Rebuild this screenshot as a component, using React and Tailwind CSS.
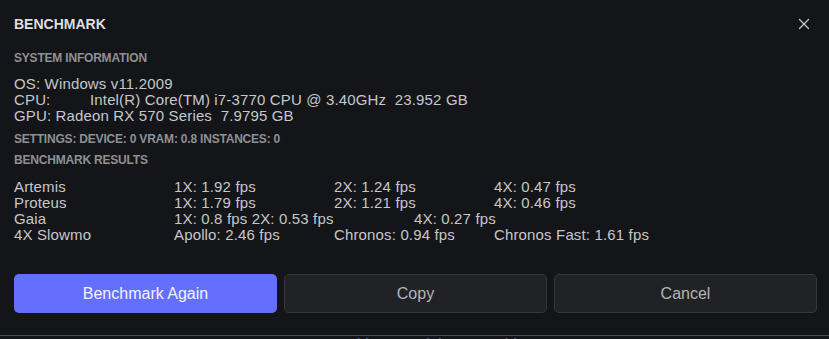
import { X } from 'lucide-react';

const results = [
  { name: 'Artemis', cols: ['1X: 1.92 fps', '2X: 1.24 fps', '4X: 0.47 fps'] },
  { name: 'Proteus', cols: ['1X: 1.79 fps', '2X: 1.21 fps', '4X: 0.46 fps'] },
];

const SectionTitle = ({ children, className = '' }) => (
  <div className={`text-[12px] leading-[16px] font-bold text-[#8f9094] tracking-[-0.2px] ${className}`}>
    {children}
  </div>
);

export default function App() {
  return (
    <div
      className="h-[339px] w-[829px] overflow-hidden bg-[#141519] flex flex-col"
      style={{ fontFamily: '"Liberation Sans", Arial, sans-serif' }}
    >
      <div className="pl-[14px] pr-[12px] flex flex-col">
        <div className="h-[48px] flex items-center justify-between">
          <h1 className="text-[14px] font-bold text-[#dedfe2]">BENCHMARK</h1>
          <button className="w-[24px] h-[24px] mr-[1px] flex items-center justify-center text-[#c9cacd]">
            <X className="w-[18px] h-[18px]" strokeWidth={1.6} />
          </button>
        </div>

        <SectionTitle className="mt-[2px]">SYSTEM INFORMATION</SectionTitle>

        <div className="mt-[10px] text-[15px] leading-[16px] tracking-[0.15px] text-[#c6c7ca] whitespace-pre">
          <div>OS: Windows v11.2009</div>
          <div>
            <span className="inline-block w-[76px]">CPU:</span>
            Intel(R) Core(TM) i7-3770 CPU @ 3.40GHz  23.952 GB
          </div>
          <div>GPU: Radeon RX 570 Series  7.9795 GB</div>
        </div>

        <SectionTitle className="mt-[7px]">SETTINGS: DEVICE: 0 VRAM: 0.8 INSTANCES: 0</SectionTitle>
        <SectionTitle className="mt-[5px]">BENCHMARK RESULTS</SectionTitle>

        <div className="mt-[11px] text-[15px] leading-[16px] tracking-[0.15px] text-[#c6c7ca] whitespace-pre">
          {results.map((r) => (
            <div key={r.name} className="flex">
              <span className="w-[160px]">{r.name}</span>
              <span className="w-[160px]">{r.cols[0]}</span>
              <span className="w-[160px]">{r.cols[1]}</span>
              <span>{r.cols[2]}</span>
            </div>
          ))}
          <div className="flex">
            <span className="w-[160px]">Gaia</span>
            <span className="w-[240px]">1X: 0.8 fps 2X: 0.53 fps</span>
            <span>4X: 0.27 fps</span>
          </div>
          <div className="flex">
            <span className="w-[160px]">4X Slowmo</span>
            <span className="w-[160px]">Apollo: 2.46 fps</span>
            <span className="w-[160px]">Chronos: 0.94 fps</span>
            <span>Chronos Fast: 1.61 fps</span>
          </div>
        </div>

        <div className="mt-[31px] grid grid-cols-3 gap-[7px]">
          <button className="h-[39px] rounded-[5px] bg-[#646ffd] text-[16px] text-[#f2f3ff]">
            Benchmark Again
          </button>
          <button className="h-[39px] rounded-[5px] bg-[#212226] border border-[#36373c] text-[16px] text-[#b3b4b8]">
            Copy
          </button>
          <button className="h-[39px] rounded-[5px] bg-[#212226] border border-[#36373c] text-[16px] text-[#b3b4b8]">
            Cancel
          </button>
        </div>
      </div>

      <div className="mt-[22px] border-t border-[#4b4c51] flex justify-center">
        <div className="text-[14px] leading-[14px] pt-[1px] text-[#4f5c80] font-bold">
          Topaz Video AI Quick Start Guide
        </div>
      </div>
    </div>
  );
}
